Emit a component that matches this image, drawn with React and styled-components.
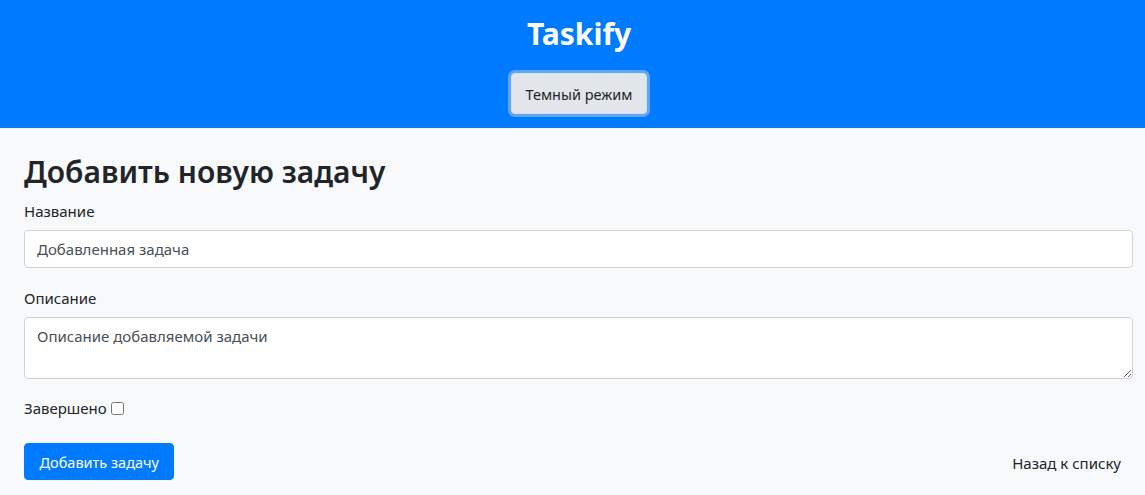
import React from 'react';
import styled, { createGlobalStyle } from 'styled-components';

const GlobalStyle = createGlobalStyle`
  html, body {
    margin: 0;
    padding: 0;
    background: #f8f9fa;
  }
  body {
    font-family: "Noto Sans", "Open Sans", sans-serif;
    color: #212529;
    font-size: 16px;
  }
  * { box-sizing: border-box; }
`;

const Header = styled.header`
  background-color: #007bff;
  height: 128px;
  display: flex;
  flex-direction: column;
  align-items: center;
  padding: 13px 0 0 13px;
`;

const Logo = styled.h1`
  margin: 0;
  color: #fff;
  font-size: 30px;
  font-weight: 700;
  line-height: 42px;
`;

const ThemeButton = styled.button`
  margin-top: 18px;
  height: 41px;
  padding: 0 14px;
  font-family: inherit;
  font-size: 14.5px;
  color: #212529;
  background-color: #e2e6ea;
  border: 1px solid #dae0e5;
  border-radius: 4px;
  box-shadow: 0 0 0 3px #5ea7f6;
  cursor: pointer;
`;

const Main = styled.main`
  padding: 24px 12px 15px 24px;
`;

const Title = styled.h2`
  margin: 0 0 8px;
  font-size: 30px;
  font-weight: 600;
  line-height: 40px;
`;

const Field = styled.div`
  margin-bottom: 19px;
`;

const Label = styled.label`
  display: block;
  font-size: 15px;
  line-height: 22px;
  margin-bottom: 8px;
`;

const Input = styled.input`
  display: block;
  width: 100%;
  height: 38px;
  padding: 6px 12px;
  font-family: inherit;
  font-size: 15px;
  color: #495057;
  background: #fff;
  border: 1px solid #ced4da;
  border-radius: 4px;
  outline: none;
`;

const TextArea = styled.textarea`
  display: block;
  width: 100%;
  height: 62px;
  padding: 8px 12px;
  font-family: inherit;
  font-size: 15px;
  color: #495057;
  background: #fff;
  border: 1px solid #ced4da;
  border-radius: 4px;
  outline: none;
  resize: vertical;
`;

const CheckRow = styled.label`
  display: flex;
  align-items: center;
  gap: 4px;
  font-size: 15px;
  line-height: 22px;
  margin-top: -1px;

  input {
    margin: 0;
    width: 13px;
    height: 13px;
  }
`;

const Actions = styled.div`
  display: flex;
  justify-content: space-between;
  align-items: center;
  margin-top: 24px;
`;

const PrimaryButton = styled.button`
  height: 37px;
  padding: 0 14.5px;
  font-family: inherit;
  font-size: 14.5px;
  color: #fff;
  background-color: #007bff;
  border: 1px solid #007bff;
  border-radius: 4px;
  cursor: pointer;
`;

const BackLink = styled.a`
  padding: 6px 12px;
  font-size: 15px;
  color: #212529;
  text-decoration: none;
  margin-top: 3px;
`;

export default function App() {
  return (
    <>
      <GlobalStyle />
      <Header>
        <Logo>Taskify</Logo>
        <ThemeButton>Темный режим</ThemeButton>
      </Header>
      <Main>
        <Title>Добавить новую задачу</Title>
        <Field>
          <Label>Название</Label>
          <Input defaultValue="Добавленная задача" />
        </Field>
        <Field>
          <Label>Описание</Label>
          <TextArea defaultValue="Описание добавляемой задачи" />
        </Field>
        <CheckRow>
          Завершено <input type="checkbox" />
        </CheckRow>
        <Actions>
          <PrimaryButton>Добавить задачу</PrimaryButton>
          <BackLink href="#">Назад к списку</BackLink>
        </Actions>
      </Main>
    </>
  );
}
